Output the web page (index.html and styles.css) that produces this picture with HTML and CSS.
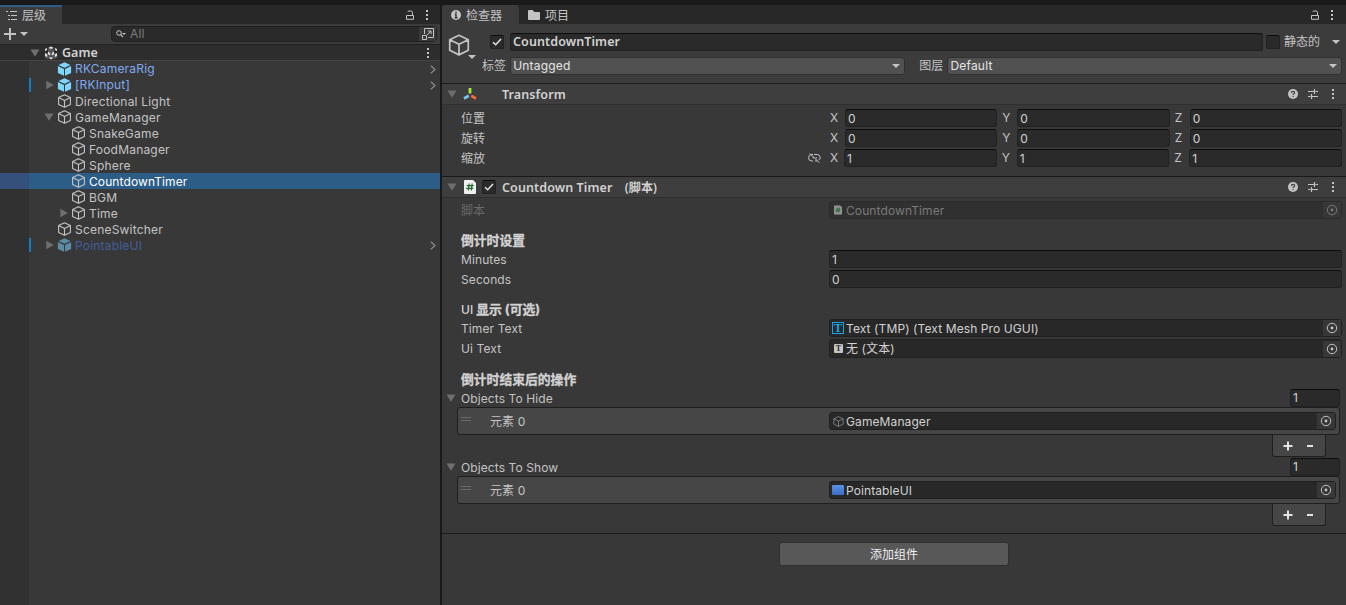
FILE: index.html
```
<!DOCTYPE html>
<html lang="zh-CN">
<head>
    <meta charset="UTF-8">
    <title>Unity - Game</title>
    <link rel="stylesheet" href="styles.css">
</head>
<body>
    <!-- Icon definitions -->
    <svg class="defs">
        <symbol id="cube" viewBox="0 0 14 14"><path d="M7 .8 12.9 3.6V10.4L7 13.3 1.1 10.4V3.6ZM1.1 3.6 7 6.5 12.9 3.6M7 6.5V13.3" fill="none" stroke="currentColor" stroke-width="1.1" stroke-linejoin="round"/></symbol>
        <symbol id="prefab" viewBox="0 0 14 14"><path d="M7 .2 13 3 7 5.8 1 3ZM.4 4 6.5 6.9V13.8L.4 10.9ZM13.6 4 7.5 6.9V13.8L13.6 10.9Z" fill="currentColor"/></symbol>
        <symbol id="down" viewBox="0 0 10 8"><path d="M.5 .5H9.5L5 7.7Z" fill="currentColor"/></symbol>
        <symbol id="right" viewBox="0 0 8 10"><path d="M.3 .8V9.2L7.8 5Z" fill="currentColor"/></symbol>
        <symbol id="drop" viewBox="0 0 8 4"><path d="M0 0H8L4 4Z" fill="currentColor"/></symbol>
        <symbol id="dots" viewBox="0 0 4 12"><path d="M1 1h2v2H1zM1 5h2v2H1zM1 9h2v2H1z" fill="currentColor"/></symbol>
        <symbol id="lock" viewBox="0 0 10 10"><path d="M1.5 5.5H8.5V9.3H1.5ZM7.5 5.5V2.2Q7.5 .9 5 .9T3 2" fill="none" stroke="currentColor"/></symbol>
        <symbol id="chevron" viewBox="0 0 6 9"><path d="M.9 .7 4.9 4.5.9 8.3" fill="none" stroke="currentColor" stroke-width="1.2"/></symbol>
        <symbol id="help" viewBox="0 0 10 10"><circle cx="5" cy="5" r="5" fill="currentColor"/><path d="M3.3 3.9Q3.4 2.4 5 2.4T6.7 3.8Q6.7 4.7 5.1 5.2V6.1M5.1 7V8.1" fill="none" stroke="#3e3e3e" stroke-width="1.2"/></symbol>
        <symbol id="preset" viewBox="0 0 10 10"><path d="M0 2.5H6M7.5 2.5H10M6.5 0V5M0 7.5H2.5M4 7.5H10M3.5 5V10" fill="none" stroke="currentColor" stroke-width="1.2"/></symbol>
        <symbol id="check" viewBox="0 0 10 8"><path d="M1 4.2 3.7 6.8 9 1" fill="none" stroke="currentColor" stroke-width="1.5"/></symbol>
        <symbol id="picker" viewBox="0 0 12 12"><circle cx="6" cy="6" r="4.7" fill="none" stroke="currentColor"/><circle cx="6" cy="6" r="1.4" fill="currentColor"/></symbol>
        <symbol id="script" viewBox="0 0 12 14"><path d="M0 1Q0 0 1 0H9L12 3V13Q12 14 11 14H1Q0 14 0 13Z" fill="currentColor"/><path d="M5.2 3.5 4.2 10.5M8.2 3.5 7.2 10.5M2.7 5.7H9.6M2.3 8.4H9.2" fill="none" stroke="#1d672c" stroke-width="1.2"/></symbol>
    </svg>

    <div class="editor">
        <!-- Hierarchy -->
        <section class="hierarchy">
            <div class="tabs">
                <div class="tab tab-hierarchy">
                    <svg width="12" height="10"><path d="M0 1.5H2M4 1.5H11M2 5.5H4M5 5.5H11M2 9.5H4M5 9.5H11" stroke="currentColor"/></svg>
                    层级
                </div>
                <div class="tab-tools">
                    <svg width="10" height="10"><use href="#lock"/></svg>
                    <svg width="4" height="12"><use href="#dots"/></svg>
                </div>
            </div>
            <div class="toolbar">
                <svg width="12" height="12"><path d="M6 0V12M0 6H12" stroke="#c4c4c4" stroke-width="2"/></svg>
                <svg width="8" height="4"><use href="#drop"/></svg>
                <div class="search">
                    <svg width="10" height="8"><circle cx="3" cy="3" r="2.3" fill="none" stroke="#c4c4c4"/><path d="M4.6 4.6 7 7.2" stroke="#c4c4c4" stroke-width="1.2"/><path d="M6 3H10L8 5Z" fill="#c4c4c4"/></svg>
                    <span>All</span>
                    <div class="search-open">
                        <svg width="12" height="12"><path d="M2.5 6V.5H11.5V9.5H6M.5 7.5H4.5V11.5H.5ZM5 7 8.8 3.2M5.8 3H9V6.2" fill="none" stroke="#c4c4c4"/></svg>
                    </div>
                </div>
            </div>
            <div class="scene">
                <svg class="fold" width="10" height="8"><use href="#down"/></svg>
                <svg width="14" height="14"><path d="M7 1 10 2.5V5.5L7 7 4 5.5V2.5ZM3.7 7 6.7 8.5V11.5L3.7 13 .7 11.5V8.5ZM10.3 7 13.3 8.5V11.5L10.3 13 7.3 11.5V8.5Z" fill="#555"/><path d="M7 .5 9.5 1.7 7 3 4.5 1.7ZM1 3 3 2V4L1 5ZM13 3 11 2V4L13 5ZM1 7 3.2 8.2V11L1 10ZM13 7 10.8 8.2V11L13 10ZM4 5.5 6.3 7V9.5L4 8.3ZM10 5.5 7.7 7V9.5L10 8.3ZM5 12 7 11 9 12 7 13.5Z" fill="#e0e0e0"/></svg>
                <b>Game</b>
                <svg class="end" width="4" height="12"><use href="#dots"/></svg>
            </div>
            <div class="tree">
                <div class="node prefab"><i></i><svg class="cube"><use href="#prefab"/></svg>RKCameraRig<svg class="go"><use href="#chevron"/></svg></div>
                <div class="node prefab changed"><i><svg width="8" height="10"><use href="#right"/></svg></i><svg class="cube"><use href="#prefab"/></svg>[RKInput]<svg class="go"><use href="#chevron"/></svg></div>
                <div class="node"><i></i><svg class="cube"><use href="#cube"/></svg><span>Directional Light</span></div>
                <div class="node"><i><svg width="10" height="8"><use href="#down"/></svg></i><svg class="cube"><use href="#cube"/></svg><span>GameManager</span></div>
                <div class="node child"><i></i><svg class="cube"><use href="#cube"/></svg><span>SnakeGame</span></div>
                <div class="node child"><i></i><svg class="cube"><use href="#cube"/></svg><span>FoodManager</span></div>
                <div class="node child"><i></i><svg class="cube"><use href="#cube"/></svg><span>Sphere</span></div>
                <div class="node child selected"><i></i><svg class="cube"><use href="#cube"/></svg><span>CountdownTimer</span></div>
                <div class="node child"><i></i><svg class="cube"><use href="#cube"/></svg><span>BGM</span></div>
                <div class="node child"><i><svg width="8" height="10"><use href="#right"/></svg></i><svg class="cube"><use href="#cube"/></svg><span>Time</span></div>
                <div class="node"><i></i><svg class="cube"><use href="#cube"/></svg><span>SceneSwitcher</span></div>
                <div class="node prefab changed inactive"><i><svg width="8" height="10"><use href="#right"/></svg></i><svg class="cube"><use href="#prefab"/></svg><span>PointableUI</span><svg class="go"><use href="#chevron"/></svg></div>
            </div>
        </section>

        <!-- Inspector -->
        <section class="inspector">
            <div class="tabs">
                <div class="tab tab-inspector">
                    <svg width="10" height="10"><circle cx="5" cy="5" r="5" fill="#c4c4c4"/><path d="M5 1.6V3.2M3.8 4.5H5V7.7M3.7 7.8H6.5" fill="none" stroke="#333" stroke-width="1.4"/></svg>
                    检查器
                </div>
                <div class="tab tab-project">
                    <svg width="12" height="10"><path d="M0 1Q0 0 1 0H4.5L6.5 2H11Q12 2 12 3V9Q12 10 11 10H1Q0 10 0 9Z" fill="#c4c4c4"/></svg>
                    项目
                </div>
                <div class="tab-tools">
                    <svg width="10" height="10"><use href="#lock"/></svg>
                    <svg width="4" height="12"><use href="#dots"/></svg>
                </div>
            </div>

            <div class="object-header">
                <div class="object-icon">
                    <svg width="22" height="22"><use href="#cube"/></svg>
                    <svg class="object-drop" width="8" height="4"><use href="#drop"/></svg>
                </div>
                <div class="object-lines">
                    <div class="object-line">
                        <span class="checkbox"><svg width="10" height="8"><use href="#check"/></svg></span>
                        <span class="field name">CountdownTimer</span>
                        <span class="checkbox"></span>
                        <span class="static">静态的</span>
                        <svg width="8" height="4"><use href="#drop"/></svg>
                    </div>
                    <div class="object-line second">
                        <span>标签</span>
                        <span class="select tag">Untagged<svg width="8" height="4"><use href="#drop"/></svg></span>
                        <span class="layer-label">图层</span>
                        <span class="select layer">Default<svg width="8" height="4"><use href="#drop"/></svg></span>
                    </div>
                </div>
            </div>

            <div class="component-header">
                <svg class="fold" width="10" height="8"><use href="#down"/></svg>
                <svg class="component-icon" width="14" height="12"><g fill="none" stroke-width="2.8"><path d="M7 0V5.5" stroke="#a5e83c"/><path d="M5.8 7.8 1 10.4" stroke="#6fc8f5"/><path d="M8.2 7.8 13 10.4" stroke="#f5693c"/></g></svg>
                <b>Transform</b>
                <div class="component-tools">
                    <svg width="10" height="10"><use href="#help"/></svg>
                    <svg width="10" height="10"><use href="#preset"/></svg>
                    <svg width="4" height="12"><use href="#dots"/></svg>
                </div>
            </div>
            <div class="component-body transform">
                <div class="row">
                    <label>位置</label>
                    <div class="vector"><span>X</span><div class="field">0</div><span>Y</span><div class="field">0</div><span>Z</span><div class="field">0</div></div>
                </div>
                <div class="row">
                    <label>旋转</label>
                    <div class="vector"><span>X</span><div class="field">0</div><span>Y</span><div class="field">0</div><span>Z</span><div class="field">0</div></div>
                </div>
                <div class="row">
                    <label>缩放<svg class="link" width="13" height="10"><path d="M5 1.5H3.8A3 3 0 0 0 3.8 8H5M6 1.5H9.2A3 3 0 0 1 10.8 7M4.5 4.8H6M7.5 4.8H9M7 8H9M1.5 .3 11.5 9.7" fill="none" stroke="#c4c4c4"/></svg></label>
                    <div class="vector scale"><span>X</span><div class="field">1</div><span>Y</span><div class="field">1</div><span>Z</span><div class="field">1</div></div>
                </div>
            </div>

            <div class="component-header">
                <svg class="fold" width="10" height="8"><use href="#down"/></svg>
                <svg class="script-icon" width="12" height="14"><use href="#script"/></svg>
                <span class="checkbox"><svg width="10" height="8"><use href="#check"/></svg></span>
                <b>Countdown Timer <span class="kind">(脚本)</span></b>
                <div class="component-tools">
                    <svg width="10" height="10"><use href="#help"/></svg>
                    <svg width="10" height="10"><use href="#preset"/></svg>
                    <svg width="4" height="12"><use href="#dots"/></svg>
                </div>
            </div>
            <div class="component-body countdown">
                <div class="row disabled">
                    <label>脚本</label>
                    <div class="field object"><svg class="script-small" viewBox="0 0 12 14"><use href="#script"/></svg><span>CountdownTimer</span><div class="pick"><svg><use href="#picker"/></svg></div></div>
                </div>
                <h4>倒计时设置</h4>
                <div class="row"><label>Minutes</label><div class="field">1</div></div>
                <div class="row"><label>Seconds</label><div class="field">0</div></div>
                <h4><span class="latin">UI</span> 显示 (可选)</h4>
                <div class="row">
                    <label>Timer Text</label>
                    <div class="field object"><div class="tmp">T</div><span>Text (TMP) (Text Mesh Pro UGUI)</span><div class="pick"><svg><use href="#picker"/></svg></div></div>
                </div>
                <div class="row tall">
                    <label>Ui Text</label>
                    <div class="field object"><div class="text-icon">T</div>无 (文本)<div class="pick"><svg><use href="#picker"/></svg></div></div>
                </div>
                <h4>倒计时结束后的操作</h4>

                <div class="list-head">
                    <svg class="fold" width="10" height="8"><use href="#down"/></svg>
                    <span>Objects To Hide</span>
                    <div class="field">1</div>
                </div>
                <div class="list">
                    <div class="grip"></div>
                    <label>元素 0</label>
                    <div class="field object"><svg class="cube-small"><use href="#cube"/></svg><span>GameManager</span><div class="pick"><svg><use href="#picker"/></svg></div></div>
                </div>
                <div class="list-foot">
                    <svg width="10" height="10"><path d="M5 .5V9.5M.5 5H9.5" stroke="#e4e4e4" stroke-width="2"/></svg>
                    <svg width="6" height="10"><path d="M0 5H6" stroke="#e4e4e4" stroke-width="2"/></svg>
                </div>

                <div class="list-head">
                    <svg class="fold" width="10" height="8"><use href="#down"/></svg>
                    <span>Objects To Show</span>
                    <div class="field">1</div>
                </div>
                <div class="list">
                    <div class="grip"></div>
                    <label>元素 0</label>
                    <div class="field object"><div class="ui-icon"></div><span>PointableUI</span><div class="pick"><svg><use href="#picker"/></svg></div></div>
                </div>
                <div class="list-foot">
                    <svg width="10" height="10"><path d="M5 .5V9.5M.5 5H9.5" stroke="#e4e4e4" stroke-width="2"/></svg>
                    <svg width="6" height="10"><path d="M0 5H6" stroke="#e4e4e4" stroke-width="2"/></svg>
                </div>
            </div>

            <div class="add">
                <button class="add-btn">添加组件</button>
            </div>
        </section>
    </div>
</body>
</html>
```
FILE: styles.css
```
/* Base Styles */
* {
    box-sizing: border-box;
}

body {
    margin: 0;
    background: #191919;
    color: #c4c4c4;
    font-family: 'Inter', 'Noto Sans CJK SC', sans-serif;
    font-size: 12px;
    letter-spacing: 0.1px;
    line-height: 16px;
    white-space: nowrap;
    overflow: hidden;
}

svg {
    display: block;
    flex: none;
}

b {
    font-family: 'Noto Sans', 'Noto Sans CJK SC', sans-serif;
    font-size: 12.5px;
    font-weight: 600;
    color: #d2d2d2;
}

.defs {
    position: absolute;
    width: 0;
    height: 0;
}

.editor {
    display: grid;
    grid-template-columns: 440px 904px;
    gap: 2px;
    height: 605px;
    padding-top: 5px;
}

.hierarchy,
.inspector {
    display: flex;
    flex-direction: column;
    background: #383838;
    min-width: 0;
}

/* Tabs */
.tabs {
    display: flex;
    height: 19px;
    background: #282828;
}

.tab {
    display: flex;
    align-items: center;
    gap: 5px;
    padding: 3px 0 0 5px;
    letter-spacing: 0;
}

.tab-hierarchy {
    width: 62px;
    padding: 1px 0 0 6px;
    gap: 4px;
    background: #3c3c3c;
    border-top: 2px solid #2c5d87;
}

.tab-hierarchy svg {
    margin-top: -3px;
}

.tab-inspector {
    width: 77px;
    padding-left: 9px;
    background: #3c3c3c;
    border-radius: 3px 3px 0 0;
}

.tab-inspector svg,
.tab-project svg {
    margin-top: -2px;
}

.tab-project {
    padding-left: 9px;
}

.tab-tools {
    display: flex;
    align-items: center;
    gap: 10px;
    margin-left: auto;
    padding-right: 11px;
}

.inspector .tab-tools {
    padding-right: 12px;
}

/* Hierarchy */
.toolbar {
    display: flex;
    align-items: center;
    height: 20px;
    padding: 0 3px 0 4px;
    gap: 4px;
    background: #3c3c3c;
}

.search {
    display: flex;
    align-items: center;
    width: 326px;
    height: 16px;
    margin-left: auto;
    padding-left: 4px;
    gap: 4px;
    background: #2a2a2a;
    border: 1px solid #202020;
    border-radius: 4px;
    color: #7c7c7c;
}

.search-open {
    display: flex;
    align-items: center;
    margin-left: auto;
    width: 17px;
    height: 14px;
    padding-left: 3px;
    background: #3a3a3a;
}

.scene {
    display: flex;
    align-items: center;
    height: 17px;
    padding: 1px 10px 0 30px;
    gap: 4px;
    background: #2d2d2d;
    border-top: 1px solid #202020;
    border-bottom: 1px solid #444;
}

.scene b {
    font-size: 12.5px;
    letter-spacing: 0;
}

.end {
    margin-left: auto;
}

.fold,
.node i svg {
    color: #6e6e6e;
}

.tree {
    flex: 1;
    background: linear-gradient(to right, #313131 29px, #383838 29px);
}

.node {
    display: flex;
    align-items: center;
    height: 16px;
    padding-left: 29px;
    padding-right: 4px;
    letter-spacing: 0.2px;
}

.node span {
    padding-top: 2px;
}

.node i {
    display: flex;
    align-items: center;
    width: 28px;
    height: 14px;
    padding-left: 15px;
}

.child i {
    width: 42px;
    padding-left: 31px;
}

.changed i {
    border-left: 2px solid #0f81be;
}

.cube {
    width: 15px;
    height: 14px;
    margin-right: 3px;
}

.go {
    width: 6px;
    height: 9px;
    margin-left: auto;
    color: #8c8c8c;
}

.prefab {
    color: #7fa9f0;
}

.prefab .cube {
    color: #7fd6fd;
}

.inactive {
    color: #435f99;
}

.inactive .cube {
    color: #5a8ba3;
}

.selected {
    background: linear-gradient(to right, #35507a 29px, #2c5d87 29px);
    color: #fff;
    letter-spacing: 0.1px;
}

.selected .cube {
    color: #c4c4c4;
}

/* Inspector fields */
.field {
    display: flex;
    align-items: center;
    flex: 1;
    height: 18px;
    padding-left: 2px;
    background: #2a2a2a;
    border: 1px solid #212121;
    border-top-color: #0d0d0d;
    border-radius: 3px;
    color: #d2d2d2;
}

.row > .field:not(.object),
.vector .field {
    padding-top: 1px;
}

.checkbox {
    display: flex;
    align-items: center;
    justify-content: center;
    flex: none;
    width: 14px;
    height: 14px;
    background: #2a2a2a;
    border: 1px solid #212121;
    border-top-color: #0d0d0d;
    border-radius: 2px;
    color: #e4e4e4;
}

.select {
    display: flex;
    align-items: center;
    justify-content: space-between;
    height: 18px;
    padding: 0 4px 0 2px;
    background: #515151;
    border: 1px solid #303030;
    border-radius: 3px;
    color: #e4e4e4;
    letter-spacing: 0.2px;
}

.select svg {
    color: #c4c4c4;
}

/* Object header */
.object-header {
    display: flex;
    height: 59px;
    background: #3c3c3c;
}

.object-icon {
    position: relative;
    width: 40px;
    padding: 10px 0 0 6px;
}

.object-drop {
    position: absolute;
    left: 26px;
    top: 31px;
}

.object-lines {
    flex: 1;
    padding-top: 8px;
}

.object-line {
    display: flex;
    align-items: center;
    height: 20px;
    padding: 0 6px 0 8px;
}

.object-line.second {
    margin-top: 4px;
    padding: 0 4px 0 0;
}

.name {
    margin: 0 3px 0 6px;
    font-family: 'Noto Sans', sans-serif;
    font-weight: 600;
    font-size: 12.5px;
}

.static {
    width: 48px;
    margin-left: 4px;
    letter-spacing: 0;
}

.tag {
    width: 395px;
    margin-left: 4px;
}

.layer-label {
    margin: 0 4px 0 14px;
}

.layer {
    flex: 1;
}

/* Components */
.component-header {
    display: flex;
    align-items: center;
    height: 22px;
    padding: 0 14px 0 5px;
    background: #3e3e3e;
    border-top: 1px solid #1a1a1a;
    border-bottom: 1px solid #303030;
}

.component-header b {
    padding-top: 1px;
}

.component-icon {
    margin: 0 25px 0 6px;
}

.script-icon {
    margin: 0 6px 0 7px;
    color: #f0f0f0;
}

.component-header .checkbox {
    margin-right: 6px;
}

.kind {
    margin-left: 9px;
    font-size: 12px;
}

.component-tools {
    display: flex;
    align-items: center;
    gap: 10px;
    margin-left: auto;
}

.component-tools svg:last-child {
    margin-left: 3px;
    margin-right: -3px;
}

.component-body {
    padding-right: 4px;
}

.transform {
    height: 71px;
    padding-top: 3px;
}

.countdown {
    height: 335px;
    padding-top: 2px;
}

.row {
    display: flex;
    align-items: center;
    height: 20px;
    padding-left: 19px;
}

.row.tall {
    height: 21px;
}

.row label {
    display: flex;
    align-items: center;
    width: 368px;
    padding-top: 2px;
}

.row.tall label {
    padding-top: 0;
}

.row.tall .field {
    height: 19px;
}

.link {
    margin-left: auto;
    margin-right: 8px;
    margin-top: -2px;
}

.vector {
    display: flex;
    align-items: center;
    flex: 1;
}

.vector span {
    width: 16px;
    padding-left: 1px;
}

.vector span:not(:first-child) {
    width: 20px;
    padding-left: 5px;
}

.vector.scale span:first-child {
    width: 15px;
}

.object {
    height: 18px;
    padding-left: 3px;
    padding-right: 0;
    border-color: #202020;
    background: #282828;
}

.object span {
    padding-top: 2px;
}

.pick {
    display: flex;
    align-items: center;
    justify-content: center;
    width: 18px;
    height: 16px;
    margin-left: auto;
    background: #373737;
}

.pick svg {
    width: 12px;
    height: 12px;
    color: #c4c4c4;
}

.disabled .field,
.disabled .pick svg {
    color: #7a7a7a;
}

.disabled label {
    color: #6a6a6a;
}

.disabled .object {
    background: #303030;
    border-color: #2b2b2b;
}

.script-small {
    width: 8px;
    height: 10px;
    margin: 0 4px 0 1px;
    color: #929292;
}

.tmp,
.text-icon {
    display: flex;
    align-items: center;
    justify-content: center;
    width: 12px;
    height: 12px;
    margin: 0 2px 0 -1px;
    border: 1px solid #16a5e8;
    color: #16a5e8;
    font: 700 12px/1 'Liberation Serif', serif;
    letter-spacing: 0;
}

.text-icon {
    width: 9px;
    height: 9px;
    margin: 0 3px 0 1px;
    border: 0;
    border-radius: 1px;
    background: #c4c4c4;
    color: #282828;
    font-size: 8px;
}

.cube-small {
    width: 11px;
    height: 11px;
    margin-right: 2px;
    color: #858585;
}

.ui-icon {
    width: 12px;
    height: 10px;
    margin: 0 2px 0 -1px;
    border-radius: 1px;
    background: linear-gradient(#5b92e5, #3a6cc4);
}

h4 {
    height: 29px;
    margin: 0;
    padding: 13px 0 0 19px;
    font-size: 12.8px;
    font-weight: 700;
    letter-spacing: 0;
    color: #d2d2d2;
    -webkit-text-stroke: 0.3px #d2d2d2;
}

.latin {
    font-size: 12px;
    font-weight: 500;
    -webkit-text-stroke: 0;
}

/* Object lists */
.list-head {
    display: flex;
    align-items: center;
    height: 19px;
    padding: 0 2px 0 4px;
}

.list-head span {
    margin-left: 5px;
    padding-top: 2px;
}

.list-head .field {
    flex: none;
    width: 50px;
    margin-left: auto;
    padding-top: 1px;
}

.list {
    display: flex;
    align-items: center;
    height: 28px;
    margin-left: 15px;
    margin-right: 2px;
    padding-right: 3px;
    background: #464646;
    border: 1px solid #1f1f1f;
    border-radius: 3px;
}

.grip {
    width: 10px;
    height: 4px;
    margin: -5px 0 0 3px;
    border-top: 1px solid #6a6a6a;
    border-bottom: 1px solid #6a6a6a;
}

.list label {
    width: 339px;
    margin-left: 19px;
    padding-top: 2px;
}

.list-foot {
    display: flex;
    align-items: center;
    justify-content: center;
    gap: 14px;
    width: 54px;
    height: 22px;
    margin-left: auto;
    margin-right: 16px;
    padding: 1px 2px 0 0;
    background: #464646;
    border: 1px solid #1f1f1f;
    border-top: 0;
    border-radius: 0 0 3px 3px;
}

/* Add component */
.add {
    flex: 1;
    border-top: 1px solid #1a1a1a;
    padding-top: 8px;
    text-align: center;
}

.add-btn {
    width: 230px;
    height: 24px;
    padding: 0 0 2px;
    background: #585858;
    border: 1px solid #303030;
    border-radius: 3px;
    color: #eee;
    font: 12px 'Noto Sans CJK SC', sans-serif;
}
```
